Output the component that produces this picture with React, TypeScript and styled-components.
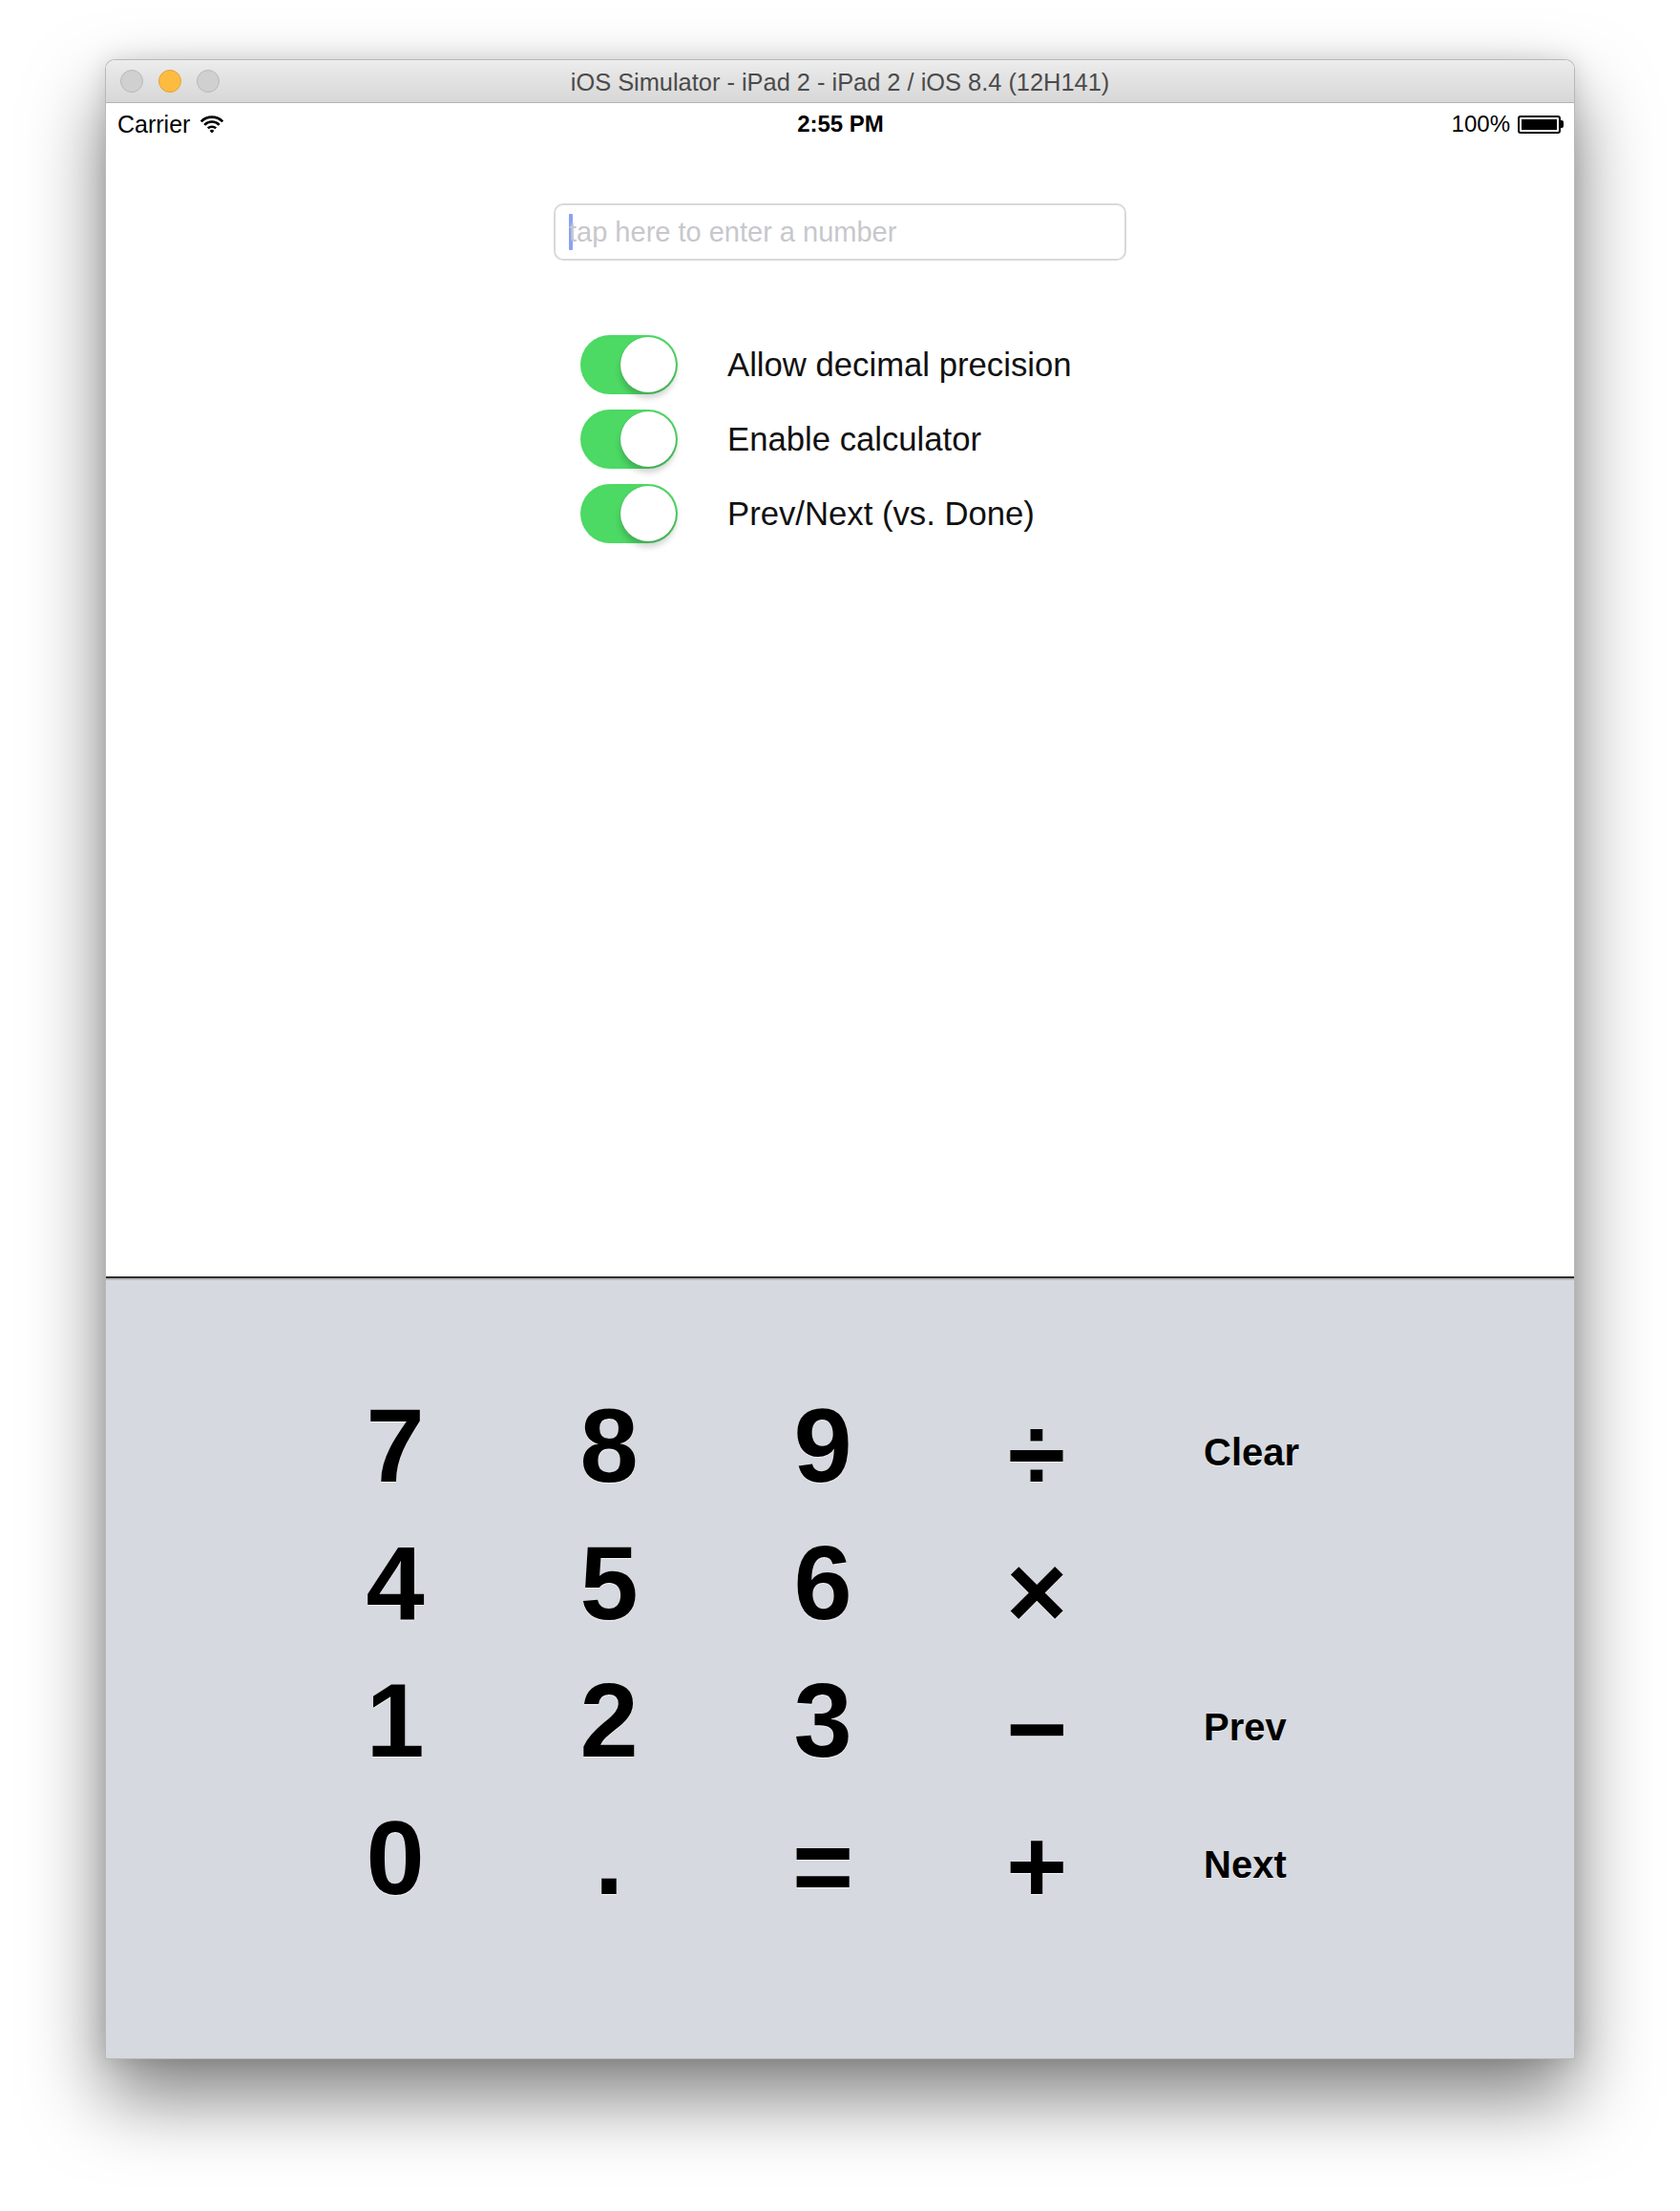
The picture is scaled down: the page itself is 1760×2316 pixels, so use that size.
import React from 'react';
import styled, { createGlobalStyle } from 'styled-components';

const GlobalStyle = createGlobalStyle`
  html, body {
    margin: 0;
    padding: 0;
    background: #ffffff;
  }
  body {
    font-family: 'Liberation Sans', Arial, sans-serif;
  }
`;

const Page = styled.div`
  width: 1760px;
  height: 2316px;
  padding-top: 62px;
  box-sizing: border-box;
  overflow: hidden;
`;

const SimWindow = styled.div`
  width: 1538px;
  margin: 0 auto;
  border: 1px solid rgba(0, 0, 0, 0.28);
  border-radius: 10px 10px 0 0;
  background: #ffffff;
  box-shadow: 0 40px 80px rgba(0, 0, 0, 0.5), 0 0 24px rgba(0, 0, 0, 0.12);
`;

const TitleBar = styled.div`
  height: 44px;
  display: grid;
  grid-template-columns: 1fr auto 1fr;
  align-items: center;
  padding: 0 15px;
  border-radius: 10px 10px 0 0;
  border-bottom: 1px solid #b3b3b3;
  background: linear-gradient(#ececec, #d7d7d7);
`;

const Lights = styled.div`
  display: flex;
  gap: 16px;
`;

const Light = styled.span<{ $color: string; $edge: string }>`
  width: 24px;
  height: 24px;
  border-radius: 50%;
  box-sizing: border-box;
  background: ${({ $color }) => $color};
  border: 1px solid ${({ $edge }) => $edge};
`;

const Title = styled.div`
  font-size: 25.4px;
  padding-top: 2px;
  color: #4b4b4b;
  white-space: nowrap;
`;

const Screen = styled.div`
  height: 2048px;
  display: flex;
  flex-direction: column;
`;

const StatusBar = styled.div`
  height: 40px;
  box-sizing: border-box;
  display: grid;
  grid-template-columns: 1fr auto 1fr;
  align-items: center;
  padding: 4px 11px 0 12px;
  font-size: 24px;
  color: #000;
`;

const Carrier = styled.div`
  display: flex;
  align-items: center;
  gap: 10px;
  font-size: 25px;
`;

const Clock = styled.div`
  font-weight: 700;
`;

const BatteryGroup = styled.div`
  display: flex;
  align-items: center;
  justify-content: flex-end;
  gap: 8px;
`;

const Battery = styled.div`
  display: flex;
  align-items: center;
`;

const BatteryBody = styled.div`
  width: 45px;
  height: 19px;
  box-sizing: border-box;
  border: 2px solid #000;
  border-radius: 3px;
  padding: 2px;
  &::before {
    content: '';
    display: block;
    width: 100%;
    height: 100%;
    background: #000;
  }
`;

const BatteryNub = styled.div`
  width: 3px;
  height: 8px;
  background: #000;
  border-radius: 0 2px 2px 0;
`;

const Content = styled.div`
  flex: 1;
  display: flex;
  flex-direction: column;
  align-items: center;
  padding-top: 65px;
`;

const NumberField = styled.div`
  width: 600px;
  height: 60px;
  box-sizing: border-box;
  border: 2px solid #d9d9d9;
  border-radius: 10px;
  padding-left: 14px;
  display: flex;
  align-items: center;
  font-size: 29px;
  color: #c7c7cd;
`;

const Caret = styled.span`
  width: 4px;
  height: 38px;
  margin-right: -4px;
  background: #8ba1f6;
  border-radius: 1px;
`;

const OptionList = styled.div`
  width: 600px;
  box-sizing: border-box;
  padding-left: 28px;
  margin-top: 78px;
  display: flex;
  flex-direction: column;
  gap: 16px;
`;

const OptionRow = styled.div`
  display: flex;
  align-items: center;
  gap: 52px;
`;

const Switch = styled.div`
  width: 102px;
  height: 62px;
  box-sizing: border-box;
  padding: 2px;
  border-radius: 31px;
  background: #4cd964;
  display: flex;
  justify-content: flex-end;
  align-items: center;
`;

const Knob = styled.span`
  width: 58px;
  height: 58px;
  border-radius: 50%;
  background: #ffffff;
  box-shadow: 0 6px 6px rgba(0, 0, 0, 0.18), 0 0 1px rgba(0, 0, 0, 0.25);
`;

const OptionLabel = styled.span`
  font-size: 34.7px;
  color: #111;
  white-space: nowrap;
`;

const Keyboard = styled.div`
  height: 819px;
  box-sizing: border-box;
  border-top: 2px solid #2e2e2e;
  background: #d6d9df;
  box-shadow: inset 0 2px 0 #b6b8bd;
  padding: 103px 0 0 191px;
`;

const KeyGrid = styled.div`
  display: grid;
  grid-template-columns: repeat(4, 224px) 220px;
  grid-auto-rows: 144px;
`;

type KeyKind = 'digit' | 'op' | 'side';

const Key = styled.div<{ $kind: KeyKind }>`
  display: flex;
  align-items: center;
  justify-content: ${({ $kind }) => ($kind === 'side' ? 'flex-start' : 'center')};
  padding: ${({ $kind }) =>
    $kind === 'side' ? '14px 0 0 63px' : $kind === 'op' ? '18px 0 0 0' : '0'};
  font-size: ${({ $kind }) => ($kind === 'side' ? '40px' : '110px')};
  font-weight: 700;
  line-height: 1;
  color: #000;
  text-shadow: 0 1px 0 rgba(255, 255, 255, 0.7);
`;

const WifiIcon = () => (
  <svg width="26" height="20" viewBox="0 0 26 20" fill="none">
    <path d="M1.7 7.3 A16 16 0 0 1 24.3 7.3" stroke="#000" strokeWidth="2.6" />
    <path d="M5.2 10.8 A11 11 0 0 1 20.8 10.8" stroke="#000" strokeWidth="2.6" />
    <path d="M8.8 14.4 A6 6 0 0 1 17.2 14.4" stroke="#000" strokeWidth="2.6" />
    <path d="M13 19.5 L10.6 17 A3.4 3.4 0 0 1 15.4 17 Z" fill="#000" />
  </svg>
);

const options = ['Allow decimal precision', 'Enable calculator', 'Prev/Next (vs. Done)'];

const keys: { label: string; kind: KeyKind }[] = [
  { label: '7', kind: 'digit' },
  { label: '8', kind: 'digit' },
  { label: '9', kind: 'digit' },
  { label: '÷', kind: 'op' },
  { label: 'Clear', kind: 'side' },
  { label: '4', kind: 'digit' },
  { label: '5', kind: 'digit' },
  { label: '6', kind: 'digit' },
  { label: '×', kind: 'op' },
  { label: '', kind: 'side' },
  { label: '1', kind: 'digit' },
  { label: '2', kind: 'digit' },
  { label: '3', kind: 'digit' },
  { label: '−', kind: 'op' },
  { label: 'Prev', kind: 'side' },
  { label: '0', kind: 'digit' },
  { label: '.', kind: 'digit' },
  { label: '=', kind: 'op' },
  { label: '+', kind: 'op' },
  { label: 'Next', kind: 'side' },
];

const App: React.FC = () => (
  <Page>
    <GlobalStyle />
    <SimWindow>
      <TitleBar>
        <Lights>
          <Light $color="#d0d0d0" $edge="#b9b9b9" />
          <Light $color="#fdbc40" $edge="#e0a43a" />
          <Light $color="#d0d0d0" $edge="#b9b9b9" />
        </Lights>
        <Title>iOS Simulator - iPad 2 - iPad 2 / iOS 8.4 (12H141)</Title>
        <div />
      </TitleBar>
      <Screen>
        <StatusBar>
          <Carrier>
            Carrier
            <WifiIcon />
          </Carrier>
          <Clock>2:55 PM</Clock>
          <BatteryGroup>
            100%
            <Battery>
              <BatteryBody />
              <BatteryNub />
            </Battery>
          </BatteryGroup>
        </StatusBar>
        <Content>
          <NumberField>
            <Caret />
            tap here to enter a number
          </NumberField>
          <OptionList>
            {options.map((label) => (
              <OptionRow key={label}>
                <Switch>
                  <Knob />
                </Switch>
                <OptionLabel>{label}</OptionLabel>
              </OptionRow>
            ))}
          </OptionList>
        </Content>
        <Keyboard>
          <KeyGrid>
            {keys.map((key, index) => (
              <Key key={index} $kind={key.kind}>
                {key.label}
              </Key>
            ))}
          </KeyGrid>
        </Keyboard>
      </Screen>
    </SimWindow>
  </Page>
);

export default App;
